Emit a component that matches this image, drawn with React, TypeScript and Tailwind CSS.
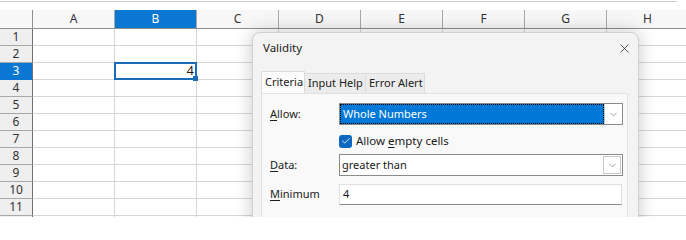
import { X, ChevronDown, Check } from "lucide-react";

const COLS = ["A", "B", "C", "D", "E", "F", "G", "H"];
const ROWS = [1, 2, 3, 4, 5, 6, 7, 8, 9, 10, 11, 12];

const Sheet = () => {
  return (
    <div className="flex flex-col w-[700px] font-['Noto_Sans',sans-serif] text-[12px] text-[#333]">
      {/* formula bar edge */}
      <div className="h-[10px] bg-white">
        <div className="h-[2px] border-b border-[#c8c8c8] w-[677px]" />
      </div>
      {/* column headers */}
      <div className="flex h-[19px] border-b border-[#8f8f8f] bg-[#f7f7f7]">
        <div className="w-[33px] border-r border-[#8f8f8f] bg-[#f7f7f7]" />
        {COLS.map((c) => (
          <div
            key={c}
            className={`w-[82px] shrink-0 border-r border-[#a8a8a8] flex items-center justify-center ${
              c === "B" ? "bg-[#0a78d2] text-white" : ""
            }`}
          >
            {c}
          </div>
        ))}
      </div>
      {/* rows */}
      {ROWS.map((r) => (
        <div key={r} className="flex h-[17px] border-b border-[#d6d6d6]">
          <div
            className={`w-[33px] shrink-0 border-r border-[#6f6f6f] flex items-center justify-center -mb-[1px] border-b ${
              r === 3 ? "bg-[#0a78d2] text-white border-b-[#0a78d2]" : "bg-[#efefef] border-b-[#a8a8a8]"
            }`}
          >
            {r < 12 ? r : ""}
          </div>
          {COLS.map((c) => (
            <div key={c} className="w-[82px] shrink-0 border-r border-[#d6d6d6] relative bg-white">
              {c === "B" && r === 3 && (
                <div className="absolute -top-[1px] -left-[1px] right-[-1px] bottom-[-1px] border-2 border-[#1a6bb8] flex items-center justify-end pr-[1px] text-[13px] text-[#222] z-10">
                  4
                  <div className="absolute -right-[3px] -bottom-[3px] w-[5px] h-[5px] bg-[#1a6bb8]" />
                </div>
              )}
            </div>
          ))}
        </div>
      ))}
    </div>
  );
};

const Dialog = () => {
  return (
    <div className="absolute left-[252px] top-[32px] w-[387px] h-[220px] rounded-[8px] bg-[#f3f3f3] border border-[#d0d0d0] shadow-[0_0_18px_rgba(0,0,0,0.22)] font-['Noto_Sans',sans-serif] text-[11px] text-[#1b1b1b] z-20 whitespace-nowrap">
      {/* title bar */}
      <div className="flex items-center justify-between h-[28px] mt-[1px] pl-[10px] pr-[6px]">
        <span className="text-[11.5px]">Validity</span>
        <X className="w-[15px] h-[15px] text-[#222]" strokeWidth={1.2} />
      </div>
      {/* tabs */}
      <div className="flex items-end ml-[8px] mt-[9px] h-[22px]">
        <div className="h-[22px] px-[3px] bg-[#fbfbfb] border border-b-0 border-[#dcdcdc] flex items-center w-[44px]">
          Criteria
        </div>
        <div className="h-[20px] px-[3px] bg-[#ececec] border border-b-0 border-l-0 border-[#dcdcdc] flex items-center w-[61px]">
          Input Help
        </div>
        <div className="h-[20px] px-[3px] bg-[#ececec] border border-b-0 border-l-0 border-[#dcdcdc] flex items-center w-[59px]">
          Error Alert
        </div>
      </div>
      {/* panel */}
      <div className="ml-[8px] w-[367px] h-[140px] bg-[#f9f9f9] border border-[#e2e2e2] pt-[9px] flex flex-col">
        {/* allow */}
        <div className="flex items-center h-[22px]">
          <span className="w-[77px] pl-[8px]">
            <u className="underline-offset-2">A</u>llow:
          </span>
          <div className="flex w-[284px] h-[22px] border border-[#8a8a8a] bg-white">
            <div className="flex-1 bg-[#0078d7] border border-dotted border-black text-white flex items-center pl-[2px]">
              Whole Numbers
            </div>
            <div className="w-[18px] flex items-center justify-center border-l border-[#c8c8c8]">
              <ChevronDown className="w-[11px] h-[11px] text-[#666]" strokeWidth={1.3} />
            </div>
          </div>
        </div>
        {/* checkbox */}
        <div className="flex items-center h-[18px] mt-[7px]">
          <div className="w-[77px]" />
          <div className="w-[13px] h-[13px] rounded-[3px] bg-[#0a67c2] flex items-center justify-center">
            <Check className="w-[10px] h-[10px] text-white" strokeWidth={2} />
          </div>
          <span className="ml-[4px] text-[11.5px]">
            Allow <u className="underline-offset-2">e</u>mpty cells
          </span>
        </div>
        {/* data */}
        <div className="flex items-center h-[22px] mt-[4px]">
          <span className="w-[77px] pl-[8px]">
            <u className="underline-offset-2">D</u>ata:
          </span>
          <div className="flex w-[284px] h-[22px] border border-[#8a8a8a] bg-white">
            <div className="flex-1 flex items-center pl-[2px]">greater than</div>
            <div className="w-[18px] m-[1px] flex items-center justify-center border border-[#c8c8c8]">
              <ChevronDown className="w-[11px] h-[11px] text-[#666]" strokeWidth={1.3} />
            </div>
          </div>
        </div>
        {/* minimum */}
        <div className="flex items-center h-[21px] mt-[8px]">
          <span className="w-[77px] pl-[8px]">
            <u className="underline-offset-2">M</u>inimum
          </span>
          <div className="flex items-center w-[283px] h-[21px] border border-[#e0e0e0] border-b-[#8a8a8a] bg-white pl-[3px]">
            4
          </div>
        </div>
      </div>
    </div>
  );
};

export default function App() {
  return (
    <div className="relative w-[686px] h-[217px] overflow-hidden bg-white">
      <Sheet />
      <Dialog />
    </div>
  );
}
